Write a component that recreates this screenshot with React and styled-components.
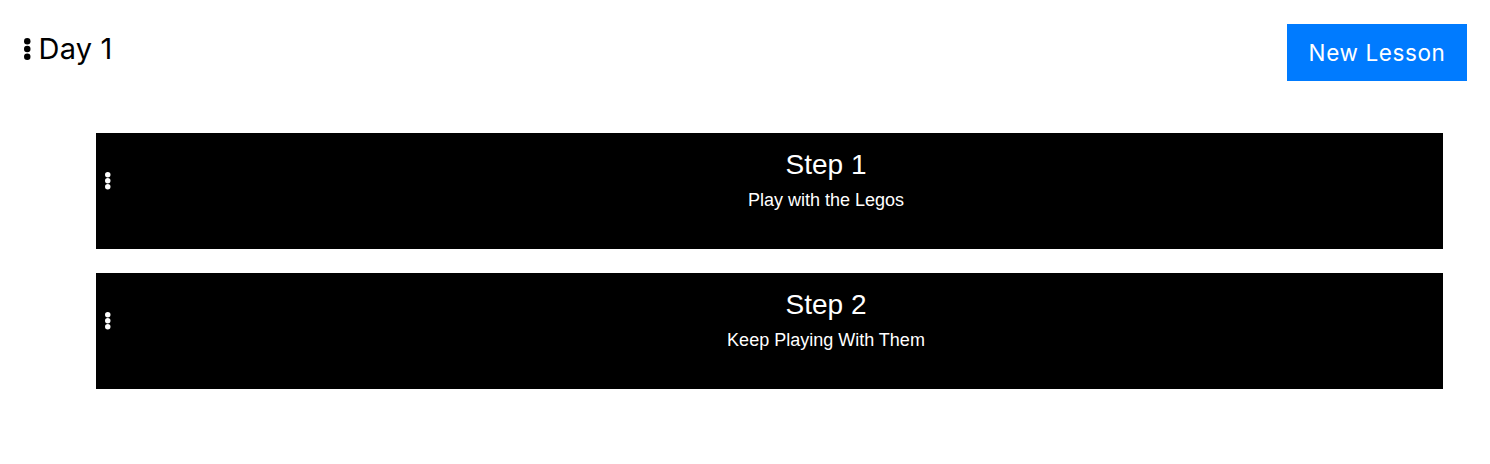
import React from "react";
import styled, { createGlobalStyle } from "styled-components";

const Global = createGlobalStyle`
  html, body { margin: 0; padding: 0; background: #fff; }
  body { font-family: "Liberation Sans", Arial, sans-serif; }
`;

const Page = styled.div`
  width: 1490px;
`;

const Header = styled.header`
  display: flex;
  justify-content: space-between;
  align-items: flex-start;
  padding: 24px 23px 0 24px;
`;

const TitleRow = styled.div`
  display: flex;
  align-items: center;
  gap: 8px;
  margin-top: 10px;
`;

const DayTitle = styled.h1`
  margin: 0;
  font-family: "Inter", "Noto Sans", sans-serif;
  font-weight: 400;
  font-size: 29px;
  line-height: 30px;
  color: #000;
  letter-spacing: 0.2px;
`;

const NewButton = styled.button`
  width: 180px;
  height: 57px;
  border: none;
  background: #007bff;
  color: #fff;
  font-family: "Inter", "Noto Sans", sans-serif;
  font-size: 22.5px;
  font-weight: 400;
  letter-spacing: 0.6px;
  padding: 0;
  cursor: pointer;
`;

const List = styled.div`
  display: flex;
  flex-direction: column;
  gap: 24px;
  padding: 52px 47px 0 96px;
`;

const Card = styled.div`
  display: flex;
  height: 116px;
  box-sizing: border-box;
  background: #000;
  color: #fff;
`;

const Handle = styled.div`
  width: 113px;
  flex: none;
  padding: 39px 0 0 9px;
  box-sizing: border-box;
`;

const Body = styled.div`
  flex: 1;
  display: flex;
  flex-direction: column;
  align-items: center;
  padding-top: 16px;
`;

const StepTitle = styled.div`
  font-size: 28px;
  line-height: 32px;
  margin-bottom: 9px;
`;

const StepText = styled.div`
  font-size: 18px;
  line-height: 21px;
`;

const Kebab = ({ size = 6, step = 7, color = "#000" }) => {
  const r = size / 2;
  const h = size + step * 2;
  return (
    <svg width={size} height={h} viewBox={`0 0 ${size} ${h}`} style={{ display: "block" }}>
      {[0, 1, 2].map((i) => (
        <circle key={i} cx={r} cy={r + i * step} r={r} fill={color} />
      ))}
    </svg>
  );
};

const steps = [
  { title: "Step 1", text: "Play with the Legos" },
  { title: "Step 2", text: "Keep Playing With Them" },
];

export default function App() {
  return (
    <Page>
      <Global />
      <Header>
        <TitleRow>
          <Kebab size={6.5} step={7.7} color="#000" />
          <DayTitle>Day 1</DayTitle>
        </TitleRow>
        <NewButton>New Lesson</NewButton>
      </Header>
      <List>
        {steps.map((s) => (
          <Card key={s.title}>
            <Handle>
              <Kebab size={5.5} step={6} color="#fff" />
            </Handle>
            <Body>
              <StepTitle>{s.title}</StepTitle>
              <StepText>{s.text}</StepText>
            </Body>
          </Card>
        ))}
      </List>
    </Page>
  );
}
